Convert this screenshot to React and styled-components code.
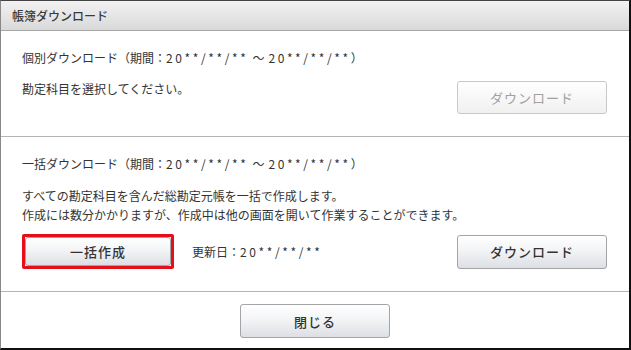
import React from 'react'
import styled, { createGlobalStyle } from 'styled-components'

const GlobalStyle = createGlobalStyle`
    html, body {
        margin: 0;
        padding: 0;
        background: #fff;
    }
    body {
        font-family: "Noto Sans CJK JP", "Noto Sans", sans-serif;
        font-size: 12px;
        color: #333;
    }
`;

const Dialog = styled.div`
    width: 631px;
    height: 350px;
    box-sizing: border-box;
    border-top: 1px solid #444;
    border-left: 1px solid #888;
    border-right: 2px solid #111;
    border-bottom: 2px solid #111;
    display: flex;
    flex-direction: column;
    background: #fff;
`;

const Header = styled.div`
    height: 29px;
    flex: none;
    display: flex;
    align-items: center;
    padding-left: 11px;
    background: linear-gradient(#f2f2f2, #d9d9d9);
    border-bottom: 1px solid #a8a8a8;
    color: #3a3a3a;
    font-size: 12px;
    font-weight: 500;
`;

const Section = styled.div`
    padding: ${props => props.pad || '18px 22px 22px 21px'};
    border-bottom: ${props => props.last ? 'none' : '1px solid #b4b4b4'};
    display: flex;
    flex-direction: column;
    flex: ${props => props.last ? '1' : 'none'};
    align-items: ${props => props.center ? 'center' : 'stretch'};
`;

const Line = styled.div`
    line-height: 18px;
    white-space: nowrap;
`;

const Period = styled.span`
    letter-spacing: 2.6px;
`;

const Tilde = styled.span`
    margin: 0 4px;
`;

const Para = styled.div`
    line-height: 19px;
    margin-top: ${props => props.top || '13px'};
`;

const Row = styled.div`
    display: flex;
    align-items: ${props => props.align || 'center'};
    margin-top: ${props => props.top || '13px'};
`;

const Spacer = styled.div`
    flex: 1;
`;

const Button = styled.button`
    width: ${props => props.w || '150px'};
    height: ${props => props.h || '34px'};
    box-sizing: border-box;
    border: 1px solid ${props => props.disabled ? '#c8c8c8' : '#a4a4a4'};
    border-radius: 3px;
    background: ${props => props.disabled
        ? 'linear-gradient(#ffffff, #f0f0f0)'
        : 'linear-gradient(#ffffff 0%, #f3f4f6 45%, #dcdfe4 100%)'};
    color: ${props => props.disabled ? '#a0a0a0' : '#333'};
    font-family: "Noto Sans CJK JP", "Noto Sans", sans-serif;
    font-size: 13px;
    font-weight: ${props => props.disabled ? 400 : 500};
    letter-spacing: 1px;
    padding: 0;
    cursor: ${props => props.disabled ? 'default' : 'pointer'};
`;

const Highlight = styled.div`
    border: 3px solid #e3101a;
    border-radius: 2px;
    display: flex;
`;

const UpdateDate = styled.span`
    margin-left: 18px;
    white-space: nowrap;
`;

const App = () => (
    <Dialog>
        <GlobalStyle />
        <Header>帳簿ダウンロード</Header>

        <Section>
            <Line>個別ダウンロード（期間：<Period>20**/**/**</Period><Tilde>～</Tilde><Period>20**/**/**</Period>）</Line>
            <Row align="flex-start">
                <Line>勘定科目を選択してください。</Line>
                <Spacer />
                <Button disabled w="150px" h="33px" style={{ marginTop: 1 }}>ダウンロード</Button>
            </Row>
        </Section>

        <Section pad="18px 22px 22px 21px">
            <Line>一括ダウンロード（期間：<Period>20**/**/**</Period><Tilde>～</Tilde><Period>20**/**/**</Period>）</Line>
            <Para>
                すべての勘定科目を含んだ総勘定元帳を一括で作成します。<br />
                作成には数分かかりますが、作成中は他の画面を開いて作業することができます。
            </Para>
            <Row top="10px">
                <Highlight>
                    <Button w="146px" h="29px">一括作成</Button>
                </Highlight>
                <UpdateDate>更新日：<Period>20**/**/**</Period></UpdateDate>
                <Spacer />
                <Button>ダウンロード</Button>
            </Row>
        </Section>

        <Section last center pad="12px 0 0 0">
            <Button>閉じる</Button>
        </Section>
    </Dialog>
);

export default App
